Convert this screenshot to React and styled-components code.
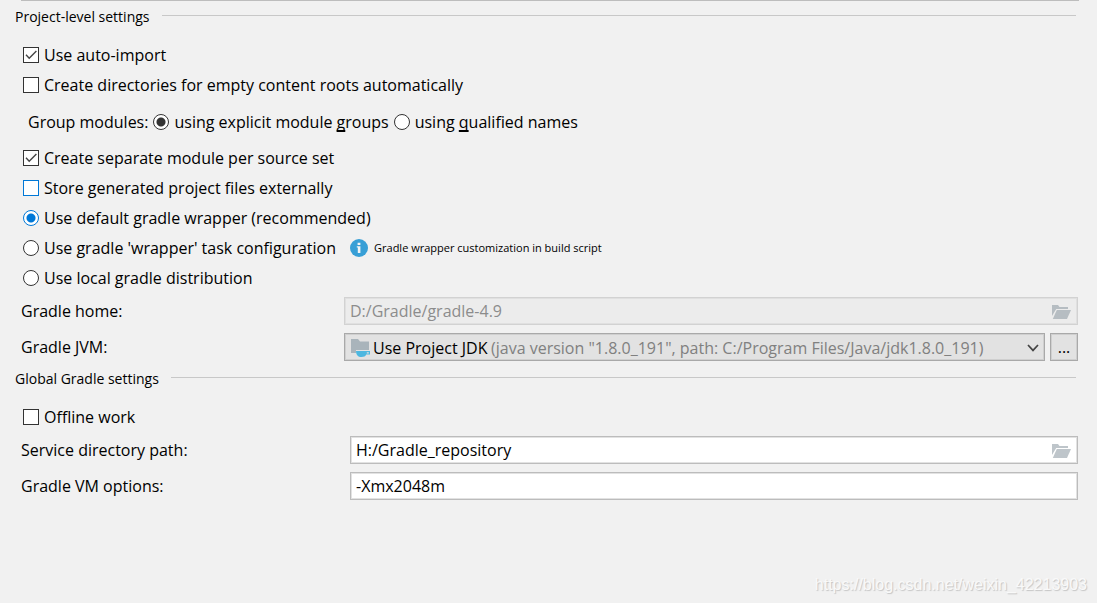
import React from "react";
import styled, { createGlobalStyle } from "styled-components";

const GlobalStyle = createGlobalStyle`
  * { box-sizing: border-box; }
  body {
    margin: 0;
    background: #f1f1f1;
    color: #000;
    font: 16px/20px "Open Sans", "Noto Sans", sans-serif;
  }
  input, select, button { font: inherit; color: inherit; margin: 0; }
`;

const Page = styled.main`
  display: flex;
  flex-direction: column;
  min-height: 100vh;
  padding: 0 19px 8px 15px;
`;

const TopRule = styled.hr`
  align-self: stretch;
  height: 1px;
  margin: 0 -1px 0 6px;
  border: 0;
  background: #bdbdbd;
`;

const Group = styled.section`
  display: flex;
  flex-direction: column;
  & + & { margin-top: 2px; }
`;

const GroupTitle = styled.h2`
  display: flex;
  align-items: center;
  gap: 12px;
  height: 32px;
  margin: 0;
  font-size: 14px;
  font-weight: 400;
  white-space: nowrap;

  &::after {
    content: "";
    flex: 1;
    height: 1px;
    margin: 0 2px 4px 0;
    background: #c8c8c8;
  }
`;

const Options = styled.div`
  display: flex;
  flex-direction: column;
  padding: 7px 0 0 8px;
`;

const Row = styled.div`
  display: flex;
  align-items: center;
  height: ${(p) => (p.$tall ? 43 : 30)}px;
  padding-left: ${(p) => (p.$tall ? 5 : 0)}px;
  gap: ${(p) => (p.$tall ? 5 : 14)}px;
`;

const Choice = styled.label`
  display: inline-flex;
  align-items: center;
  gap: 5px;
  white-space: nowrap;
`;

const Control = styled.input`
  appearance: none;
  flex: none;
  width: 16px;
  height: 16px;
  background: #fff no-repeat center;
  border: 1px solid ${(p) => (p.$active ? "#0078d7" : "#333")};
  border-radius: ${(p) => (p.type === "radio" ? "50%" : "0")};
  grid-area: 1 / 1;
  &[type="radio"]:checked {
    background-image: radial-gradient(circle, ${(p) => (p.$active ? "#0078d7" : "#333")} 4px, transparent 5px);
  }
`;

const Tick = styled.svg`
  grid-area: 1 / 1;
  display: none;
  pointer-events: none;
  input:checked + & { display: block; }
`;

const Box = styled.span`
  display: grid;
`;

const Mnemonic = styled.u`
  text-decoration-thickness: 2px;
  text-underline-offset: 2px;
  text-decoration-skip-ink: none;
`;

const Hint = styled.p`
  display: flex;
  align-items: center;
  gap: 6px;
  margin: 0;
  font-size: 11px;
  white-space: nowrap;
`;

const Fields = styled.div`
  display: grid;
  grid-template-columns: ${(p) => p.$label}px minmax(0, 1fr);
  row-gap: 8px;
  align-items: center;
  padding: 4px 0 0 6px;
`;

const FieldLabel = styled.label`
  white-space: nowrap;
`;

const Field = styled.div`
  display: flex;
  align-items: center;
  height: 28px;
  padding: 0 6px 0 5px;
  border: 1px solid ${(p) => (p.$disabled ? "#d2d2d2" : "#bcbcbc")};
  box-shadow: inset 0 0 0 1px ${(p) => (p.$disabled ? "#e0e0e0" : "#e2e2e2")};
  background: ${(p) => (p.$disabled ? "#ececec" : "#fff")};
`;

const TextInput = styled.input`
  flex: 1;
  min-width: 0;
  height: 24px;
  padding: 0;
  border: 0;
  outline: 0;
  background: transparent;
  &:disabled { color: #8c8c8c; }
`;

const IconButton = styled.button`
  display: flex;
  padding: 2px 0 0;
  border: 0;
  background: transparent;
`;

const SelectRow = styled.div`
  display: flex;
  gap: 5px;
`;

const SelectBox = styled.div`
  display: grid;
  flex: 1;
  min-width: 0;
  align-items: center;
`;

const Select = styled.select`
  grid-area: 1 / 1;
  appearance: none;
  width: 100%;
  height: 28px;
  padding: 2px 28px 0;
  border: 1px solid #a9a9a9;
  box-shadow: inset 0 0 0 1px #cfcfcf;
  border-radius: 0;
  background: #e2e2e2;
`;

const SelectFace = styled.div`
  grid-area: 1 / 1;
  display: grid;
  grid-template-columns: 140px minmax(0, 1fr) 12px;
  align-items: center;
  padding: 2px 6px 0 7px;
  pointer-events: none;
`;

const Detail = styled.span`
  color: #808080;
  white-space: nowrap;
  overflow: hidden;
`;

const MoreButton = styled.button`
  width: 28px;
  height: 28px;
  padding: 0;
  border: 1px solid #a9a9a9;
  box-shadow: inset 0 0 0 1px #cfcfcf;
  background: #e2e2e2;
`;

const Watermark = styled.footer`
  margin: auto -9px 0 0;
  align-self: flex-end;
  font: 16px/20px "Liberation Sans", sans-serif;
  color: #f9f9f9;
  text-shadow: 1px 1px 1px #c4c4c4;
`;

function Check({ children, ...rest }) {
  return (
    <Choice>
      <Box>
        <Control type="checkbox" {...rest} />
        <Tick width="16" height="16" viewBox="0 0 16 16" fill="none" stroke="#444" strokeWidth="1.4">
          <path d="M3 7.8L6.2 11.2L13.4 4" />
        </Tick>
      </Box>
      <span>{children}</span>
    </Choice>
  );
}

function Radio({ children, ...rest }) {
  return (
    <Choice>
      <Control type="radio" {...rest} />
      <span>{children}</span>
    </Choice>
  );
}

function OpenFolder({ color }) {
  return (
    <svg width="19" height="14" viewBox="0 0 19 14" fill={color}>
      <path d="M0 0H6L7.5 2H16V4H4.2L0 11Z" />
      <path d="M4.8 5H19L15 14H.8Z" />
    </svg>
  );
}

function JdkFolder() {
  return (
    <svg width="20" height="18" viewBox="0 0 20 18">
      <path d="M0 0H7L9 2.5H18V11H5V14H0Z" fill="#a9b4bb" />
      <path
        fillRule="evenodd"
        d="M5 12H19V15.5H15.2C14.4 17.3 13 18 10.5 18C7 18 5.2 16 5 12ZM15.8 13.2V14.4H17.8V13.2Z"
        fill="#4cb7e0"
      />
    </svg>
  );
}

function InfoIcon() {
  return (
    <svg width="18" height="18" viewBox="0 0 18 18">
      <circle cx="9" cy="9" r="9" fill="#389fd6" />
      <path d="M7.6 3.8H10.4V6H7.6ZM6.8 7.2H10.4V14H7.8V8.4H6.8Z" fill="#f4f4f4" />
    </svg>
  );
}

export default function App() {
  return (
    <>
      <GlobalStyle />
      <Page>
        <TopRule />
        <Group>
          <GroupTitle>Project-level settings</GroupTitle>
          <Options>
            <Row><Check defaultChecked>Use auto-import</Check></Row>
            <Row><Check>Create directories for empty content roots automatically</Check></Row>
            <Row $tall role="radiogroup" aria-labelledby="group-modules">
              <span id="group-modules">Group modules:</span>
              <Radio name="modules" defaultChecked>
                using explicit module <Mnemonic>g</Mnemonic>roups
              </Radio>
              <Radio name="modules">
                using <Mnemonic>q</Mnemonic>ualified names
              </Radio>
            </Row>
            <Row><Check defaultChecked>Create separate module per source set</Check></Row>
            <Row><Check $active>Store generated project files externally</Check></Row>
            <Row><Radio name="distribution" $active defaultChecked>Use default gradle wrapper (recommended)</Radio></Row>
            <Row>
              <Radio name="distribution">Use gradle 'wrapper' task configuration</Radio>
              <Hint><InfoIcon />Gradle wrapper customization in build script</Hint>
            </Row>
            <Row><Radio name="distribution">Use local gradle distribution</Radio></Row>
          </Options>
          <Fields $label={323}>
            <FieldLabel htmlFor="home">Gradle home:</FieldLabel>
            <Field $disabled>
              <TextInput id="home" defaultValue="D:/Gradle/gradle-4.9" disabled />
              <IconButton aria-label="Browse Gradle home" disabled><OpenFolder color="#b6bdc2" /></IconButton>
            </Field>
            <FieldLabel htmlFor="jvm">Gradle JVM:</FieldLabel>
            <SelectRow>
              <SelectBox>
                <Select id="jvm"><option>Use Project JDK</option></Select>
                <SelectFace>
                  <JdkFolder />
                  <Detail>(java version "1.8.0_191", path: C:/Program Files/Java/jdk1.8.0_191)</Detail>
                  <svg width="12" height="8" viewBox="0 0 12 8" fill="none" stroke="#444" strokeWidth="1.7">
                    <path d="M1 1L6 6.4L11 1" />
                  </svg>
                </SelectFace>
              </SelectBox>
              <MoreButton>...</MoreButton>
            </SelectRow>
          </Fields>
        </Group>
        <Group>
          <GroupTitle>Global Gradle settings</GroupTitle>
          <Options>
            <Row><Check>Offline work</Check></Row>
          </Options>
          <Fields $label={329}>
            <FieldLabel htmlFor="service">Service directory path:</FieldLabel>
            <Field>
              <TextInput id="service" defaultValue="H:/Gradle_repository" />
              <IconButton aria-label="Browse service directory"><OpenFolder color="#bec5ca" /></IconButton>
            </Field>
            <FieldLabel htmlFor="vm">Gradle VM options:</FieldLabel>
            <Field><TextInput id="vm" defaultValue="-Xmx2048m" /></Field>
          </Fields>
        </Group>
        <Watermark>https://blog.csdn.net/weixin_42213903</Watermark>
      </Page>
    </>
  );
}
